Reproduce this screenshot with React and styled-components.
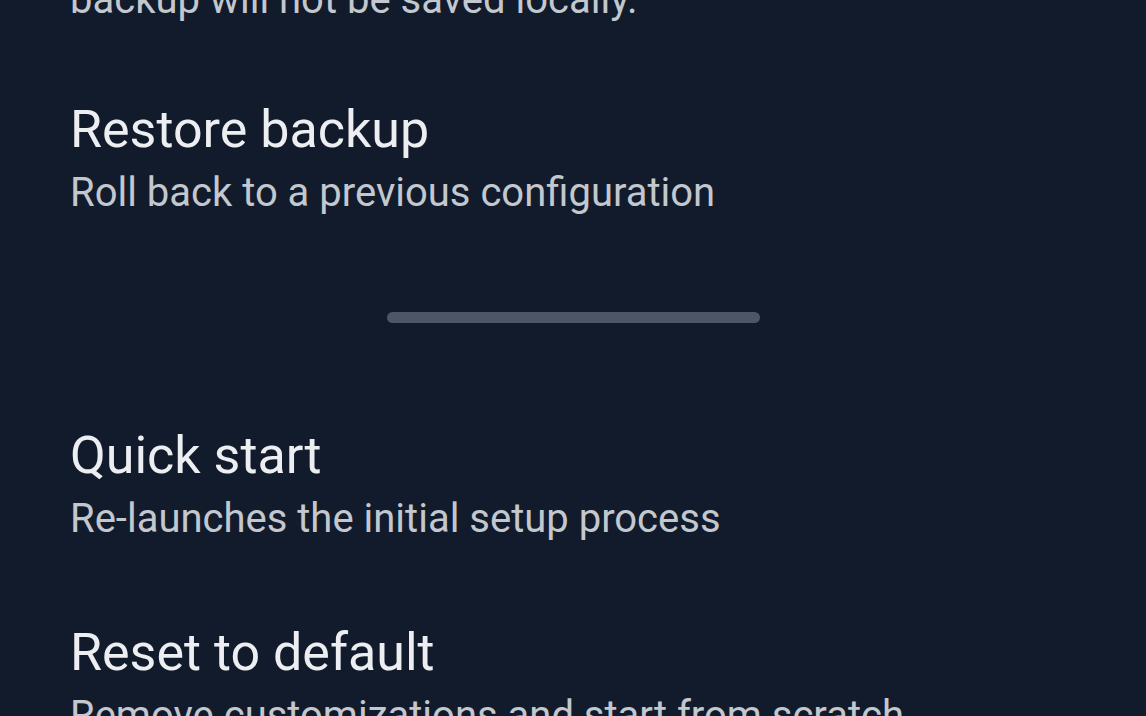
import styled, { createGlobalStyle } from "styled-components";

const GlobalStyle = createGlobalStyle`
    html, body {
        margin: 0;
        padding: 0;
        background-color: #121b2b;
        overflow: hidden;
    }
    body {
        font-family: Roboto, "Noto Sans", "Liberation Sans", sans-serif;
    }
`;

const topItems = [
    { subtitle: "backup will not be saved locally.", partial: true },
    { title: "Restore backup", subtitle: "Roll back to a previous configuration" },
];

const bottomItems = [
    { title: "Quick start", subtitle: "Re-launches the initial setup process" },
    { title: "Reset to default", subtitle: "Remove customizations and start from scratch" },
];

const SettingsItem = ({ title, subtitle, partial }) => (
    <Item $partial={partial}>
        {title && <Title>{title}</Title>}
        <Subtitle $first={!title}>{subtitle}</Subtitle>
    </Item>
);

const App = () => {
    return (
        <>
            <GlobalStyle />
            <Screen>
                {topItems.map((item, index) => (
                    <SettingsItem key={index} {...item} />
                ))}
                <DividerWrap>
                    <Handle />
                </DividerWrap>
                {bottomItems.map((item, index) => (
                    <SettingsItem key={index} {...item} />
                ))}
            </Screen>
        </>
    );
};

export default App;

const Screen = styled.div`
    width: 1146px;
    height: 716px;
    overflow: hidden;
    background-color: #121b2b;
    display: flex;
    flex-direction: column;
`;

const Item = styled.div`
    display: flex;
    flex-direction: column;
    padding: ${(p) => (p.$partial ? "0 70px 36px" : "40px 70px")};
    margin-top: ${(p) => (p.$partial ? "-24px" : "0")};
    flex-shrink: 0;
`;

const Title = styled.div`
    font-size: 52px;
    line-height: 60px;
    color: #eceef1;
    white-space: nowrap;
`;

const Subtitle = styled.div`
    font-size: 40px;
    line-height: 48px;
    margin-top: ${(p) => (p.$first ? "0" : "9px")};
    color: #c3c7ce;
    white-space: nowrap;
`;

const DividerWrap = styled.div`
    display: flex;
    justify-content: center;
    padding: 55px 0 63px;
    flex-shrink: 0;
`;

const Handle = styled.div`
    width: 373px;
    height: 11px;
    border-radius: 6px;
    background-color: #4d5666;
`;
